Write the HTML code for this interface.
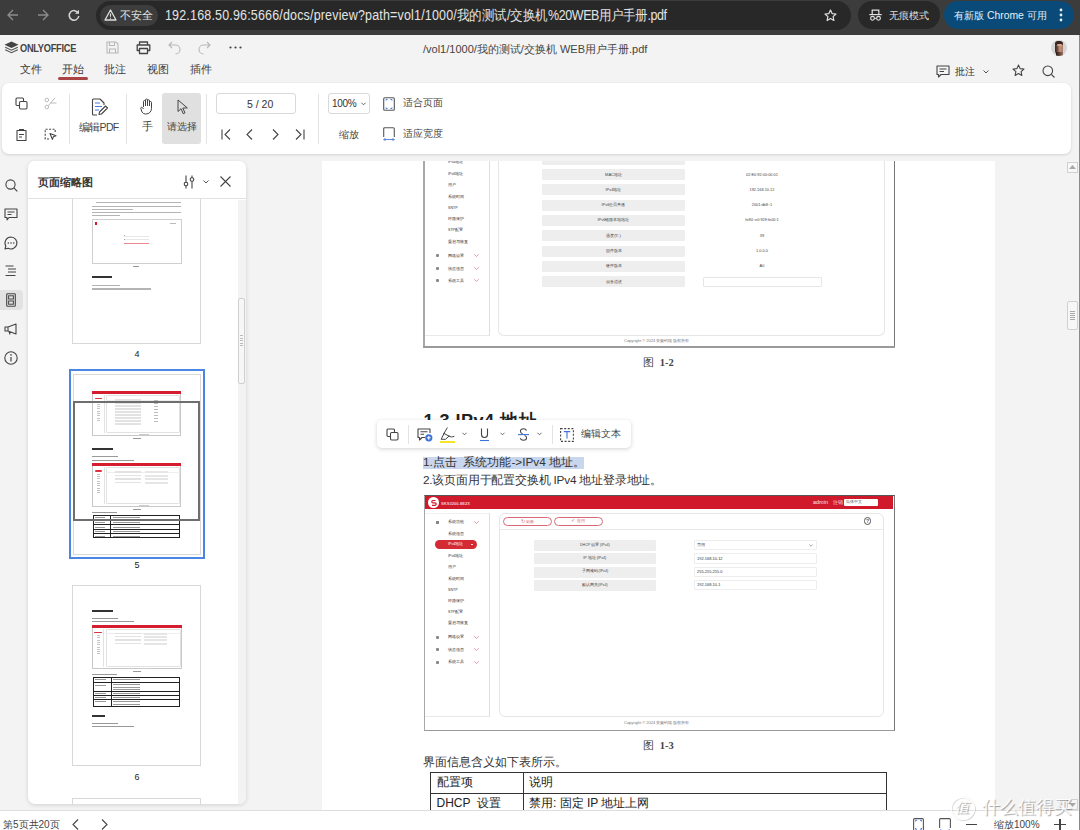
<!DOCTYPE html>
<html><head><meta charset="utf-8">
<style>
*{box-sizing:border-box;margin:0;padding:0}
html,body{width:1080px;height:830px;overflow:hidden}
body{position:relative;background:#f3f3f3;font-family:"Liberation Sans",sans-serif;color:#333}
.a{position:absolute}
svg{position:absolute;overflow:visible}
.t{position:absolute;white-space:nowrap;line-height:1}
</style></head><body>

<!-- ============ CHROME TOP BAR ============ -->
<div class="a" id="chrome" style="left:0;top:0;width:1080px;height:35px;background:#3c3c3c">
  <svg style="left:7px;top:9px" width="12" height="12" viewBox="0 0 12 12"><path d="M11 6H1.5M6 1L1 6l5 5" fill="none" stroke="#8c8c8c" stroke-width="1.4"/></svg>
  <svg style="left:37px;top:9px" width="12" height="12" viewBox="0 0 12 12"><path d="M1 6h9.5M6 1l5 5-5 5" fill="none" stroke="#8c8c8c" stroke-width="1.4"/></svg>
  <svg style="left:68px;top:9px" width="12" height="12" viewBox="0 0 12 12"><path d="M10.3 4.2A4.8 4.8 0 1 0 10.8 7" fill="none" stroke="#d6d6d6" stroke-width="1.5"/><path d="M11 0.8v4h-4z" fill="#d6d6d6"/></svg>
  <div class="a" style="left:96px;top:1px;width:755px;height:29px;border-radius:15px;background:#282828"></div>
  <div class="a" style="left:100px;top:5px;width:58px;height:21px;border-radius:11px;background:#3d3d3d"></div>
  <svg style="left:104px;top:9px" width="13" height="12" viewBox="0 0 13 12"><path d="M6.5 1L12 11H1z" fill="none" stroke="#e0e0e0" stroke-width="1.3" stroke-linejoin="round"/><path d="M6.5 4.5v3.3M6.5 8.8v1" stroke="#e0e0e0" stroke-width="1.1"/></svg>
  <div class="t" style="left:120px;top:10px;font-size:10.5px;color:#e3e3e3">不安全</div>
  <div class="t" style="left:165px;top:7.5px;font-size:14px;color:#e3e3e3;transform:scaleX(0.893);transform-origin:0 0"><span style="letter-spacing:0.19px">192.168.50.96:5666/docs/preview?path=vol1/1000/</span>我的测试/交换机<span style="letter-spacing:-0.45px">%20WEB用户手册.pdf</span></div>
  <svg style="left:824px;top:9px" width="13" height="13" viewBox="0 0 13 13"><path d="M6.5 1l1.6 3.6 3.9.4-2.9 2.6.8 3.9-3.4-2-3.4 2 .8-3.9L1 5l3.9-.4z" fill="none" stroke="#e0e0e0" stroke-width="1.2" stroke-linejoin="round"/></svg>
  <div class="a" style="left:858px;top:1px;width:82px;height:28px;border-radius:14px;background:#282828"></div>
  <svg style="left:869px;top:9px" width="13" height="12" viewBox="0 0 13 12"><path d="M3.2 5V1.2h6.6V5" fill="none" stroke="#e0e0e0" stroke-width="1.2"/><path d="M0.3 5.6h12.4" stroke="#e0e0e0" stroke-width="1.2"/><circle cx="3.5" cy="9.3" r="1.9" fill="none" stroke="#e0e0e0" stroke-width="1.1"/><circle cx="9.5" cy="9.3" r="1.9" fill="none" stroke="#e0e0e0" stroke-width="1.1"/><path d="M5.4 9.3h2.2" stroke="#e0e0e0" stroke-width="1"/></svg>
  <div class="t" style="left:889px;top:10.5px;font-size:10.3px;color:#e3e3e3">无痕模式</div>
  <div class="a" style="left:944px;top:1px;width:130px;height:28px;border-radius:14px;background:#0a4a78"></div>
  <div class="t" style="left:954px;top:10.5px;font-size:10.4px;color:#e6eef5">有新版 Chrome 可用</div>
  <svg style="left:1059px;top:8px" width="4" height="14" viewBox="0 0 4 14"><circle cx="2" cy="2" r="1.4" fill="#e6eef5"/><circle cx="2" cy="7" r="1.4" fill="#e6eef5"/><circle cx="2" cy="12" r="1.4" fill="#e6eef5"/></svg>
</div>

<!-- ============ ONLYOFFICE HEADER ============ -->
<div class="a" id="hdr" style="left:0;top:35px;width:1080px;height:125px;background:#f3f3f3">
  <!-- logo -->
  <svg style="left:4px;top:6px" width="15" height="13" viewBox="0 0 15 13"><path d="M7.5 0.5L14.5 3.8 7.5 7.1 0.5 3.8z" fill="#444"/><path d="M1.2 6.2l6.3 3 6.3-3M1.2 8.7l6.3 3 6.3-3" fill="none" stroke="#555" stroke-width="1.2"/></svg>
  <div class="t" id="logo" style="left:20px;top:8px;font-size:10.5px;letter-spacing:-0.3px;transform:scaleX(0.88);transform-origin:0 0;font-weight:bold;color:#444">ONLYOFFICE</div>
  <!-- quick icons -->
  <svg style="left:106px;top:6px" width="13" height="13" viewBox="0 0 13 13"><path d="M1 1h9l2 2v9H1z M3.5 1v3.5h5V1 M3.5 12V8h6v4" fill="none" stroke="#b8b8b8" stroke-width="1.1"/></svg>
  <svg style="left:136px;top:6px" width="15" height="13" viewBox="0 0 15 13"><path d="M3.5 4V1h8v3 M3.5 9.5H1.2V4h12.6v5.5h-2.3 M3.5 7.5h8v5h-8z" fill="none" stroke="#444" stroke-width="1.3" stroke-linejoin="round"/></svg>
  <svg style="left:168px;top:6px" width="13" height="13" viewBox="0 0 13 13"><path d="M4 1L1 4l3 3M1 4h6.5a4.5 4.5 0 0 1 0 9" fill="none" stroke="#b8b8b8" stroke-width="1.1"/></svg>
  <svg style="left:198px;top:6px" width="13" height="13" viewBox="0 0 13 13"><path d="M9 1l3 3-3 3M12 4H5.5a4.5 4.5 0 0 0 0 9" fill="none" stroke="#b8b8b8" stroke-width="1.1"/></svg>
  <svg style="left:229px;top:11px" width="13" height="3" viewBox="0 0 13 3"><circle cx="1.5" cy="1.5" r="1.1" fill="#444"/><circle cx="6.5" cy="1.5" r="1.1" fill="#444"/><circle cx="11.5" cy="1.5" r="1.1" fill="#444"/></svg>
  <div class="t" id="title" style="left:423px;top:9px;font-size:11px;color:#444">/vol1/1000/我的测试/交换机 WEB用户手册.pdf</div>
  <!-- avatar -->
  <div class="a" style="left:1050.5px;top:4.5px;width:16.5px;height:16px;border-radius:50%;background:#d6d6d6;overflow:hidden">
    <div class="a" style="left:4.5px;top:1.8px;width:8px;height:13px;border-radius:4px 4px 3px 3px;background:linear-gradient(90deg,#3a2620 0,#6a4a3c 30%,#c49480 60%,#a87a66 100%)"></div>
    <div class="a" style="left:4.5px;top:1.5px;width:8px;height:3.5px;border-radius:4px 4px 1px 1px;background:#3a2620"></div>
    <div class="a" style="left:6.5px;top:4px;width:4.5px;height:2.5px;border-radius:2px;background:#d9a890"></div>
    <div class="a" style="left:5px;top:12.5px;width:7px;height:5px;background:linear-gradient(90deg,#2a1a14,#9a7060)"></div>
  </div>
  <!-- tabs -->
  <div class="t" id="tab1" style="left:20px;top:29px;font-size:11px;color:#3a3a3a">文件</div>
  <div class="t" id="tab2" style="left:62px;top:29px;font-size:11px;color:#3a3a3a">开始</div>
  <div class="a" style="left:58px;top:42px;width:30px;height:3px;border-radius:2px;background:#aa4444"></div>
  <div class="t" id="tab3" style="left:104px;top:29px;font-size:11px;color:#3a3a3a">批注</div>
  <div class="t" id="tab4" style="left:147px;top:29px;font-size:11px;color:#3a3a3a">视图</div>
  <div class="t" id="tab5" style="left:190px;top:29px;font-size:11px;color:#3a3a3a">插件</div>
  <!-- right header -->
  <svg style="left:936px;top:30px" width="14" height="13" viewBox="0 0 14 13"><path d="M1 1h12v8.5H5L2.5 12V9.5H1z M3.5 4h7 M3.5 6.5h4.5" fill="none" stroke="#444" stroke-width="1.1" stroke-linejoin="round"/></svg>
  <div class="t" id="pz" style="left:955px;top:31.5px;font-size:10px;color:#333">批注</div>
  <svg style="left:983px;top:35px" width="6" height="4" viewBox="0 0 6 4"><path d="M0.5 0.5l2.5 2.5 2.5-2.5" fill="none" stroke="#555" stroke-width="1"/></svg>
  <svg style="left:1012px;top:29px" width="13" height="13" viewBox="0 0 13 13"><path d="M6.5 1l1.6 3.6 3.9.4-2.9 2.6.8 3.9-3.4-2-3.4 2 .8-3.9L1 5l3.9-.4z" fill="none" stroke="#444" stroke-width="1.1" stroke-linejoin="round"/></svg>
  <svg style="left:1042px;top:30px" width="13" height="13" viewBox="0 0 13 13"><circle cx="5.8" cy="5.8" r="4.8" fill="none" stroke="#444" stroke-width="1.1"/><path d="M9.3 9.3L12.5 12.5" stroke="#444" stroke-width="1.1"/></svg>
</div>

<!-- ============ TOOLBAR PANEL ============ -->
<div class="a" id="tb" style="left:2px;top:83px;width:1069px;height:71.3px;background:#fff;border-radius:7px;box-shadow:0 1px 3px rgba(0,0,0,0.14)">
</div>
<div class="a" id="tbi" style="left:0;top:0;width:1080px;height:160px">
  <!-- copy -->
  <svg style="left:15px;top:97px" width="13" height="13" viewBox="0 0 13 13"><path d="M4.5 8.5H2A1 1 0 0 1 1 7.5V2a1 1 0 0 1 1-1h5.5a1 1 0 0 1 1 1v2.5" fill="none" stroke="#444" stroke-width="1.1"/><rect x="4.5" y="4.5" width="7.5" height="7.5" rx="1.2" fill="none" stroke="#444" stroke-width="1.1"/></svg>
  <!-- cut -->
  <svg style="left:44px;top:97px" width="13" height="13" viewBox="0 0 13 13"><circle cx="2.8" cy="3" r="1.8" fill="none" stroke="#bbb" stroke-width="1"/><circle cx="2.8" cy="10" r="1.8" fill="none" stroke="#bbb" stroke-width="1"/><path d="M4.3 8.8L11 0.8 M6.5 6h6" fill="none" stroke="#bbb" stroke-width="1"/></svg>
  <!-- paste -->
  <svg style="left:16px;top:128px" width="11" height="13" viewBox="0 0 11 13"><path d="M3 1.5h5M1 2.5h9v10H1z M3 6.5h5 M3 9h3" fill="none" stroke="#444" stroke-width="1.1" stroke-linejoin="round"/></svg>
  <!-- select all -->
  <svg style="left:44px;top:128px" width="13" height="13" viewBox="0 0 13 13"><path d="M5 11H1.2V1.2h10v3.5" fill="none" stroke="#444" stroke-width="1.1" stroke-dasharray="2 1.5"/><path d="M6 5.5l6 2.3-2.6 1-1 2.6z" fill="none" stroke="#444" stroke-width="1.1" stroke-linejoin="round"/></svg>
  <div class="a" style="left:69px;top:94px;width:1px;height:50px;background:#e3e3e3"></div>
  <!-- edit pdf -->
  <svg style="left:91px;top:98px" width="17" height="18" viewBox="0 0 17 18"><path d="M9 1H2.5A1 1 0 0 0 1.5 2v14a1 1 0 0 0 1 1H6 M9 1l4 4v2" fill="none" stroke="#444" stroke-width="1.1" stroke-linejoin="round"/><path d="M4 5h5M4 8.5h7M4 12h4" stroke="#4a7be0" stroke-width="1.1"/><path d="M8 16.5l0.5-2.5 6-6 2 2-6 6z" fill="none" stroke="#444" stroke-width="1.1" stroke-linejoin="round"/></svg>
  <div class="t" id="editpdf" style="left:79px;top:121.5px;font-size:10.5px;letter-spacing:-0.7px;color:#444">编辑PDF</div>
  <div class="a" style="left:126px;top:94px;width:1px;height:50px;background:#e3e3e3"></div>
  <!-- hand -->
  <svg style="left:140px;top:98px" width="13" height="17" viewBox="0 0 13 17"><path d="M3.5 9V3.5a1 1 0 0 1 2 0V8 M5.5 8V2a1 1 0 0 1 2 0v6 M7.5 8V2.8a1 1 0 0 1 2 0V8 M9.5 8V4.5a1 1 0 0 1 2 0v6a5.5 5.5 0 0 1-5.5 5.5h-.5A4 4 0 0 1 2 14L0.8 10.5a1 1 0 0 1 1.8-0.8L3.5 11" fill="none" stroke="#444" stroke-width="1" stroke-linejoin="round"/></svg>
  <div class="t" id="hand" style="left:142px;top:121px;font-size:11px;color:#444">手</div>
  <div class="a" style="left:162px;top:93px;width:39px;height:51px;border-radius:3px;background:#e0e0e0"></div>
  <svg style="left:177px;top:99px" width="12" height="16" viewBox="0 0 12 16"><path d="M1 1v11.5l3-2.8 2.2 5 1.8-0.8-2.2-4.8 4.5-0.2z" fill="none" stroke="#444" stroke-width="1" stroke-linejoin="round"/></svg>
  <div class="t" id="sel" style="left:167px;top:122px;font-size:10px;color:#444">请选择</div>
  <div class="a" style="left:206px;top:94px;width:1px;height:50px;background:#e3e3e3"></div>
  <!-- page input -->
  <div class="a" style="left:216px;top:93px;width:80px;height:21px;border:1px solid #d9d9d9;border-radius:3px;background:#fff"></div>
  <div class="t" id="pgnum" style="left:247px;top:98.5px;font-size:10.5px;color:#333">5 / 20</div>
  <svg style="left:221px;top:129px" width="10" height="11" viewBox="0 0 10 11"><path d="M1 0.5v10M9 0.5L4 5.5l5 5" fill="none" stroke="#444" stroke-width="1.1"/></svg>
  <svg style="left:246px;top:129px" width="7" height="11" viewBox="0 0 7 11"><path d="M6 0.5L1 5.5l5 5" fill="none" stroke="#444" stroke-width="1.1"/></svg>
  <svg style="left:272px;top:129px" width="7" height="11" viewBox="0 0 7 11"><path d="M1 0.5l5 5-5 5" fill="none" stroke="#444" stroke-width="1.1"/></svg>
  <svg style="left:295px;top:129px" width="10" height="11" viewBox="0 0 10 11"><path d="M9 0.5v10M1 0.5l5 5-5 5" fill="none" stroke="#444" stroke-width="1.1"/></svg>
  <div class="a" style="left:318px;top:94px;width:1px;height:50px;background:#e3e3e3"></div>
  <!-- zoom -->
  <div class="a" style="left:328px;top:93px;width:42px;height:21px;border:1px solid #d9d9d9;border-radius:3px;background:#fff"></div>
  <div class="t" id="zm" style="left:332px;top:98.5px;font-size:10px;letter-spacing:-0.3px;color:#333">100%</div>
  <svg style="left:361px;top:102px" width="5" height="4" viewBox="0 0 5 4"><path d="M0.5 0.8l2 2 2-2" fill="none" stroke="#555" stroke-width="0.9"/></svg>
  <div class="t" id="sf" style="left:339px;top:130px;font-size:10px;color:#444">缩放</div>
  <svg style="left:383px;top:97px" width="12" height="14" viewBox="0 0 12 14"><rect x="0.7" y="0.7" width="10.6" height="12.6" rx="1" fill="none" stroke="#555" stroke-width="1.1"/><path d="M3 3.5V2.5h1.5M7.5 2.5H9v1M9 10.5v1H7.5M4.5 11.5H3v-1" fill="none" stroke="#4a7be0" stroke-width="1"/></svg>
  <div class="t" id="fitp" style="left:402.5px;top:98px;font-size:10px;color:#444">适合页面</div>
  <svg style="left:383px;top:127px" width="12" height="14" viewBox="0 0 12 14"><path d="M0.7 10V1.7a1 1 0 0 1 1-1h8.6a1 1 0 0 1 1 1V10" fill="none" stroke="#555" stroke-width="1.1"/><path d="M0.5 12.5h11M2.5 11l-1.5 1.5 1.5 1.5M9.5 11l1.5 1.5-1.5 1.5" fill="none" stroke="#4a7be0" stroke-width="0.9"/></svg>
  <div class="t" id="fitw" style="left:402.5px;top:129px;font-size:10px;color:#444">适应宽度</div>
</div>

<!-- ============ LEFT ICON BAR ============ -->
<div class="a" id="lbar" style="left:0;top:160px;width:26px;height:650px">
  <svg style="left:5px;top:19px" width="13" height="13" viewBox="0 0 13 13"><circle cx="5.5" cy="5.5" r="4.6" fill="none" stroke="#444" stroke-width="1.1"/><path d="M8.8 8.8L12.3 12.3" stroke="#444" stroke-width="1.2"/></svg>
  <svg style="left:4px;top:48px" width="14" height="13" viewBox="0 0 14 13"><path d="M1 1h12v8.5H5L3 11.8V9.5H1z" fill="none" stroke="#444" stroke-width="1.1" stroke-linejoin="round"/><path d="M3.5 4h7M3.5 6.5h4" stroke="#444" stroke-width="1.1"/></svg>
  <svg style="left:4px;top:76px" width="14" height="14" viewBox="0 0 14 14"><path d="M7 1a6 6 0 1 1-2.9 11.3L1 13l0.8-3A6 6 0 0 1 7 1z" fill="none" stroke="#444" stroke-width="1.1" stroke-linejoin="round"/><circle cx="4.3" cy="7" r="0.8" fill="#444"/><circle cx="7" cy="7" r="0.8" fill="#444"/><circle cx="9.7" cy="7" r="0.8" fill="#444"/></svg>
  <svg style="left:5px;top:105px" width="12" height="12" viewBox="0 0 12 12"><path d="M0.5 1h8M3 4h8M3 7h8M0.5 10.5h10" stroke="#444" stroke-width="1.1"/></svg>
  <div class="a" style="left:0;top:130px;width:23px;height:20px;border-radius:0 4px 4px 0;background:#e2e2e2"></div>
  <svg style="left:6px;top:133px" width="10" height="14" viewBox="0 0 10 14"><rect x="0.7" y="0.7" width="8.6" height="12.6" rx="0.8" fill="none" stroke="#444" stroke-width="1.1"/><rect x="2.6" y="2.8" width="4.8" height="3.2" fill="none" stroke="#444" stroke-width="1"/><rect x="2.6" y="8" width="4.8" height="3.2" fill="none" stroke="#444" stroke-width="1"/></svg>
  <svg style="left:4px;top:163px" width="14" height="12" viewBox="0 0 14 12"><path d="M1 4h3l8-3v10L4 8H1z M4 4v4 M5 8.3l1 3.2" fill="none" stroke="#444" stroke-width="1.1" stroke-linejoin="round"/></svg>
  <svg style="left:4px;top:191px" width="14" height="14" viewBox="0 0 14 14"><circle cx="7" cy="7" r="6.2" fill="none" stroke="#444" stroke-width="1.1"/><path d="M7 6v4.5" stroke="#444" stroke-width="1.2"/><circle cx="7" cy="3.9" r="0.8" fill="#444"/></svg>
</div>

<!-- ============ THUMBNAILS PANEL ============ -->
<div class="a" id="thp" style="left:28px;top:161px;width:218px;height:643px;background:#fff;border-radius:7px;box-shadow:0 1px 4px rgba(0,0,0,0.14);overflow:hidden">
  <div class="a" style="left:-28px;top:-161px;width:1080px;height:830px"><div class="a" style="left:72.4px;top:150px;width:128.6px;height:193.6px;border:1px solid #d8d8d8;background:#fff"></div>
<div class="a" style="left:96px;top:202.3px;width:85px;height:1.2px;background:#b4b4b4"></div>
<div class="a" style="left:92px;top:205.9px;width:89px;height:1.2px;background:#b4b4b4"></div>
<div class="a" style="left:92px;top:209.1px;width:41px;height:1.2px;background:#b4b4b4"></div>
<div class="a" style="left:92px;top:212px;width:89px;height:1.2px;background:#b4b4b4"></div>
<div class="a" style="left:92px;top:215px;width:28px;height:1.2px;background:#b4b4b4"></div>
<div class="a" style="left:92.2px;top:219.3px;width:89.4px;height:44.7px;border:0.8px solid #cfcfcf"></div>
<div class="a" style="left:95.3px;top:221.6px;width:1.7px;height:3.1px;background:#d0192b"></div>
<div class="a" style="left:124.2px;top:243.2px;width:25.3px;height:1.1px;background:#e88a94"></div>
<div class="a" style="left:124.2px;top:235.5px;width:25.3px;height:0.7px;background:#e8e8e8"></div>
<div class="a" style="left:124.2px;top:239.3px;width:25.3px;height:0.7px;background:#e8e8e8"></div>
<div class="a" style="left:124.2px;top:235px;width:1.3px;height:1px;background:#aaa"></div>
<div class="a" style="left:124.2px;top:238.8px;width:1.3px;height:1.0px;background:#aaa"></div>
<div class="a" style="left:170px;top:222.8px;width:6px;height:0.8px;background:#bbb"></div>
<div class="a" style="left:133px;top:265.6px;width:6px;height:0.9px;background:#999"></div>
<div class="a" style="left:92px;top:276.3px;width:20px;height:1.8px;background:#333"></div>
<div class="a" style="left:92px;top:285px;width:28px;height:1.2px;background:#b4b4b4"></div>
<div class="a" style="left:92px;top:288.4px;width:59px;height:1.2px;background:#b4b4b4"></div>
<div class="t" style="left:-13px;top:350.3px;width:300px;text-align:center;font-size:9px;color:#222">4</div>
<div class="a" style="left:68.5px;top:369.2px;width:136.8px;height:189.5px;border:2.6px solid #4a86e4"></div>
<div class="a" style="left:72.5px;top:373.8px;width:128.5px;height:181.7px;border:1px solid #d8d8d8"></div>
<div class="a" style="left:91.9px;top:391px;width:89.4px;height:44.7px;border:0.7px solid #c8c8c8;background:#fff"></div>
<div class="a" style="left:91.9px;top:391px;width:89.4px;height:3px;background:#d41e30"></div>
<div class="a" style="left:92.60000000000001px;top:395px;width:12.1px;height:38.2px;border-right:0.5px solid #e2e2e2"></div>
<div class="a" style="left:105.9px;top:395px;width:74.6px;height:38.0px;border:0.5px solid #e2e2e2;border-radius:1px"></div>
<div class="a" style="left:105.9px;top:399.5px;width:74.6px;height:0.4px;background:#eee"></div>
<div class="a" style="left:94.5px;top:398px;width:7.9px;height:1.4px;background:#e0303f;border-radius:1px"></div>
<div class="a" style="left:114.9px;top:399.0px;width:26.6px;height:1.6px;background:#e2e2e2"></div>
<div class="a" style="left:153.9px;top:399.6px;width:4.0px;height:0.6px;background:#bbb"></div>
<div class="a" style="left:114.9px;top:402.0px;width:26.6px;height:1.6px;background:#e2e2e2"></div>
<div class="a" style="left:153.9px;top:402.6px;width:4.0px;height:0.6px;background:#bbb"></div>
<div class="a" style="left:114.9px;top:405.0px;width:26.6px;height:1.6px;background:#e2e2e2"></div>
<div class="a" style="left:153.9px;top:405.6px;width:4.0px;height:0.6px;background:#bbb"></div>
<div class="a" style="left:114.9px;top:408.0px;width:26.6px;height:1.6px;background:#e2e2e2"></div>
<div class="a" style="left:153.9px;top:408.6px;width:4.0px;height:0.6px;background:#bbb"></div>
<div class="a" style="left:114.9px;top:411.0px;width:26.6px;height:1.6px;background:#e2e2e2"></div>
<div class="a" style="left:153.9px;top:411.6px;width:4.0px;height:0.6px;background:#bbb"></div>
<div class="a" style="left:114.9px;top:414.0px;width:26.6px;height:1.6px;background:#e2e2e2"></div>
<div class="a" style="left:153.9px;top:414.6px;width:4.0px;height:0.6px;background:#bbb"></div>
<div class="a" style="left:114.9px;top:417.0px;width:26.6px;height:1.6px;background:#e2e2e2"></div>
<div class="a" style="left:153.9px;top:417.6px;width:4.0px;height:0.6px;background:#bbb"></div>
<div class="a" style="left:114.9px;top:420.0px;width:26.6px;height:1.6px;background:#e2e2e2"></div>
<div class="a" style="left:153.9px;top:420.6px;width:4.0px;height:0.6px;background:#bbb"></div>
<div class="a" style="left:114.9px;top:423.0px;width:26.6px;height:1.6px;background:#e2e2e2"></div>
<div class="a" style="left:96.9px;top:401.5px;width:3.5px;height:0.6px;background:#c4c4c4"></div>
<div class="a" style="left:96.9px;top:403.8px;width:3.5px;height:0.6px;background:#c4c4c4"></div>
<div class="a" style="left:96.9px;top:406.1px;width:3.5px;height:0.6px;background:#c4c4c4"></div>
<div class="a" style="left:96.9px;top:408.4px;width:3.5px;height:0.6px;background:#c4c4c4"></div>
<div class="a" style="left:96.9px;top:410.7px;width:3.5px;height:0.6px;background:#c4c4c4"></div>
<div class="a" style="left:96.9px;top:413.0px;width:3.5px;height:0.6px;background:#c4c4c4"></div>
<div class="a" style="left:96.9px;top:415.3px;width:3.5px;height:0.6px;background:#c4c4c4"></div>
<div class="a" style="left:96.9px;top:417.6px;width:3.5px;height:0.6px;background:#c4c4c4"></div>
<div class="a" style="left:96.9px;top:419.9px;width:3.5px;height:0.6px;background:#c4c4c4"></div>
<div class="a" style="left:138.9px;top:433.9px;width:10.0px;height:0.6px;background:#ccc"></div>
<div class="a" style="left:133px;top:437.5px;width:8px;height:0.8px;background:#999"></div>
<div class="a" style="left:92px;top:448px;width:21px;height:1.6px;background:#333"></div>
<div class="a" style="left:92px;top:456.2px;width:26px;height:0.8px;background:#999"></div>
<div class="a" style="left:92px;top:460.2px;width:42px;height:0.8px;background:#999"></div>
<div class="a" style="left:91.9px;top:463.3px;width:89.4px;height:43.7px;border:0.7px solid #c8c8c8;background:#fff"></div>
<div class="a" style="left:91.9px;top:463.3px;width:89.4px;height:3.0px;background:#d41e30"></div>
<div class="a" style="left:92.60000000000001px;top:467.3px;width:12.1px;height:37.2px;border-right:0.5px solid #e2e2e2"></div>
<div class="a" style="left:105.9px;top:467.3px;width:74.6px;height:37.0px;border:0.5px solid #e2e2e2;border-radius:1px"></div>
<div class="a" style="left:105.9px;top:471.8px;width:74.6px;height:0.4px;background:#eee"></div>
<div class="a" style="left:94.5px;top:470.3px;width:7.9px;height:1.4px;background:#e0303f;border-radius:1px"></div>
<div class="a" style="left:114.9px;top:471.3px;width:26.6px;height:1.6px;background:#e2e2e2"></div>
<div class="a" style="left:144.5px;top:471.3px;width:23.1px;height:1.6px;border:0.4px solid #e6e6e6"></div>
<div class="a" style="left:114.9px;top:474.7px;width:26.6px;height:1.6px;background:#e2e2e2"></div>
<div class="a" style="left:144.5px;top:474.7px;width:23.1px;height:1.6px;border:0.4px solid #e6e6e6"></div>
<div class="a" style="left:114.9px;top:478.1px;width:26.6px;height:1.6px;background:#e2e2e2"></div>
<div class="a" style="left:144.5px;top:478.1px;width:23.1px;height:1.6px;border:0.4px solid #e6e6e6"></div>
<div class="a" style="left:114.9px;top:481.5px;width:26.6px;height:1.6px;background:#e2e2e2"></div>
<div class="a" style="left:144.5px;top:481.5px;width:23.1px;height:1.6px;border:0.4px solid #e6e6e6"></div>
<div class="a" style="left:96.9px;top:473.8px;width:3.5px;height:0.6px;background:#c4c4c4"></div>
<div class="a" style="left:96.9px;top:476.1px;width:3.5px;height:0.6px;background:#c4c4c4"></div>
<div class="a" style="left:96.9px;top:478.40000000000003px;width:3.5px;height:0.6px;background:#c4c4c4"></div>
<div class="a" style="left:96.9px;top:480.7px;width:3.5px;height:0.6px;background:#c4c4c4"></div>
<div class="a" style="left:96.9px;top:483.0px;width:3.5px;height:0.6px;background:#c4c4c4"></div>
<div class="a" style="left:96.9px;top:485.3px;width:3.5px;height:0.6px;background:#c4c4c4"></div>
<div class="a" style="left:96.9px;top:487.6px;width:3.5px;height:0.6px;background:#c4c4c4"></div>
<div class="a" style="left:96.9px;top:489.90000000000003px;width:3.5px;height:0.6px;background:#c4c4c4"></div>
<div class="a" style="left:96.9px;top:492.2px;width:3.5px;height:0.6px;background:#c4c4c4"></div>
<div class="a" style="left:138.9px;top:505.2px;width:10.0px;height:0.6px;background:#ccc"></div>
<div class="a" style="left:133px;top:509.2px;width:8px;height:0.8px;background:#999"></div>
<div class="a" style="left:92px;top:512.3px;width:25px;height:0.8px;background:#999"></div>
<div class="a" style="left:93px;top:515px;width:86.7px;height:23px;border:1px solid #222"></div>
<div class="a" style="left:93px;top:519.5px;width:86.7px;height:0.9px;background:#222"></div>
<div class="a" style="left:93px;top:524.2px;width:86.7px;height:0.9px;background:#222"></div>
<div class="a" style="left:93px;top:528.8px;width:86.7px;height:0.9px;background:#222"></div>
<div class="a" style="left:93px;top:533.4px;width:86.7px;height:0.9px;background:#222"></div>
<div class="a" style="left:110px;top:515px;width:0.9px;height:23px;background:#222"></div>
<div class="a" style="left:110px;top:515px;width:0.9px;height:23px;background:#222"></div>
<div class="a" style="left:95px;top:517.3px;width:10px;height:0.8px;background:#999"></div>
<div class="a" style="left:113px;top:517.3px;width:27px;height:0.8px;background:#999"></div>
<div class="a" style="left:95px;top:521.8px;width:10px;height:0.8px;background:#999"></div>
<div class="a" style="left:113px;top:521.8px;width:27px;height:0.8px;background:#999"></div>
<div class="a" style="left:95px;top:526.5px;width:10px;height:0.8px;background:#999"></div>
<div class="a" style="left:113px;top:526.5px;width:27px;height:0.8px;background:#999"></div>
<div class="a" style="left:95px;top:531.0999999999999px;width:10px;height:0.8px;background:#999"></div>
<div class="a" style="left:113px;top:531.0999999999999px;width:27px;height:0.8px;background:#999"></div>
<div class="a" style="left:95px;top:535.8px;width:10px;height:0.8px;background:#999"></div>
<div class="a" style="left:113px;top:535.8px;width:27px;height:0.8px;background:#999"></div>
<div class="a" style="left:73.2px;top:400.5px;width:126.8px;height:120.5px;border:2px solid #6e6e6e"></div>
<div class="t" style="left:-13px;top:560.8px;width:300px;text-align:center;font-size:9px;color:#222">5</div>
<div class="a" style="left:72.4px;top:585.3px;width:128.4px;height:181.1px;border:1px solid #d8d8d8"></div>
<div class="a" style="left:91.5px;top:610px;width:21.2px;height:1.6px;background:#333"></div>
<div class="a" style="left:91.5px;top:618px;width:26.5px;height:0.8px;background:#999"></div>
<div class="a" style="left:91.5px;top:621.2px;width:42.5px;height:0.8px;background:#999"></div>
<div class="a" style="left:91.5px;top:624.5px;width:90.1px;height:44.8px;border:0.7px solid #c8c8c8;background:#fff"></div>
<div class="a" style="left:91.5px;top:624.5px;width:90.1px;height:3.0px;background:#d41e30"></div>
<div class="a" style="left:92.2px;top:628.5px;width:12.1px;height:38.3px;border-right:0.5px solid #e2e2e2"></div>
<div class="a" style="left:105.5px;top:628.5px;width:75.3px;height:38.1px;border:0.5px solid #e2e2e2;border-radius:1px"></div>
<div class="a" style="left:105.5px;top:633.0px;width:75.3px;height:0.4px;background:#eee"></div>
<div class="a" style="left:94.1px;top:631.5px;width:7.9px;height:1.4px;background:#e0303f;border-radius:1px"></div>
<div class="a" style="left:114.5px;top:632.5px;width:26.6px;height:1.6px;background:#e2e2e2"></div>
<div class="a" style="left:144.1px;top:632.5px;width:23.1px;height:1.6px;border:0.4px solid #e6e6e6"></div>
<div class="a" style="left:114.5px;top:635.9px;width:26.6px;height:1.6px;background:#e2e2e2"></div>
<div class="a" style="left:144.1px;top:635.9px;width:23.1px;height:1.6px;border:0.4px solid #e6e6e6"></div>
<div class="a" style="left:114.5px;top:639.3px;width:26.6px;height:1.6px;background:#e2e2e2"></div>
<div class="a" style="left:144.1px;top:639.3px;width:23.1px;height:1.6px;border:0.4px solid #e6e6e6"></div>
<div class="a" style="left:114.5px;top:642.7px;width:26.6px;height:1.6px;background:#e2e2e2"></div>
<div class="a" style="left:144.1px;top:642.7px;width:23.1px;height:1.6px;border:0.4px solid #e6e6e6"></div>
<div class="a" style="left:96.5px;top:635.0px;width:3.5px;height:0.6px;background:#c4c4c4"></div>
<div class="a" style="left:96.5px;top:637.3px;width:3.5px;height:0.6px;background:#c4c4c4"></div>
<div class="a" style="left:96.5px;top:639.6px;width:3.5px;height:0.6px;background:#c4c4c4"></div>
<div class="a" style="left:96.5px;top:641.9px;width:3.5px;height:0.6px;background:#c4c4c4"></div>
<div class="a" style="left:96.5px;top:644.2px;width:3.5px;height:0.6px;background:#c4c4c4"></div>
<div class="a" style="left:96.5px;top:646.5px;width:3.5px;height:0.6px;background:#c4c4c4"></div>
<div class="a" style="left:96.5px;top:648.8px;width:3.5px;height:0.6px;background:#c4c4c4"></div>
<div class="a" style="left:96.5px;top:651.1px;width:3.5px;height:0.6px;background:#c4c4c4"></div>
<div class="a" style="left:96.5px;top:653.4px;width:3.5px;height:0.6px;background:#c4c4c4"></div>
<div class="a" style="left:138.5px;top:667.5px;width:10.0px;height:0.6px;background:#ccc"></div>
<div class="a" style="left:133px;top:671px;width:8px;height:0.8px;background:#999"></div>
<div class="a" style="left:91.5px;top:673.7px;width:25.5px;height:0.8px;background:#999"></div>
<div class="a" style="left:92.8px;top:676.8px;width:87.0px;height:29.9px;border:1px solid #222"></div>
<div class="a" style="left:92.8px;top:681.5px;width:87.0px;height:0.9px;background:#222"></div>
<div class="a" style="left:92.8px;top:691.3px;width:87.0px;height:0.9px;background:#222"></div>
<div class="a" style="left:92.8px;top:695.3px;width:87.0px;height:0.9px;background:#222"></div>
<div class="a" style="left:92.8px;top:699.3px;width:87.0px;height:0.9px;background:#222"></div>
<div class="a" style="left:110.5px;top:676.8px;width:0.9px;height:29.9px;background:#222"></div>
<div class="a" style="left:113px;top:678.5px;width:27px;height:0.8px;background:#999"></div>
<div class="a" style="left:113px;top:683.5px;width:27px;height:0.8px;background:#999"></div>
<div class="a" style="left:113px;top:686.5px;width:27px;height:0.8px;background:#999"></div>
<div class="a" style="left:113px;top:689px;width:27px;height:0.8px;background:#999"></div>
<div class="a" style="left:113px;top:692.8px;width:27px;height:0.8px;background:#999"></div>
<div class="a" style="left:113px;top:696.8px;width:27px;height:0.8px;background:#999"></div>
<div class="a" style="left:113px;top:701px;width:27px;height:0.8px;background:#999"></div>
<div class="a" style="left:113px;top:703.5px;width:27px;height:0.8px;background:#999"></div>
<div class="a" style="left:95px;top:678.5px;width:11px;height:0.8px;background:#999"></div>
<div class="a" style="left:95px;top:685px;width:11px;height:0.8px;background:#999"></div>
<div class="a" style="left:95px;top:693px;width:11px;height:0.8px;background:#999"></div>
<div class="a" style="left:95px;top:697px;width:11px;height:0.8px;background:#999"></div>
<div class="a" style="left:95px;top:701px;width:11px;height:0.8px;background:#999"></div>
<div class="a" style="left:91.5px;top:715px;width:13.5px;height:1.6px;background:#333"></div>
<div class="a" style="left:91.5px;top:722.8px;width:26.5px;height:0.8px;background:#999"></div>
<div class="a" style="left:91.5px;top:726px;width:42.5px;height:0.8px;background:#999"></div>
<div class="t" style="left:-13px;top:773.0px;width:300px;text-align:center;font-size:9px;color:#222">6</div>
<div class="a" style="left:72.4px;top:797.5px;width:128.4px;height:32.5px;border:1px solid #d8d8d8"></div>
</div>
  <div class="a" style="left:0;top:0;width:218px;height:38px;border-bottom:1px solid #e2e2e2;background:#fff"></div>
  <div class="t" id="thtitle" style="left:10px;top:15.5px;font-size:10.5px;font-weight:bold;color:#333">页面缩略图</div>
  <svg style="left:155px;top:14px" width="12" height="14" viewBox="0 0 12 14"><path d="M3 0.5v13M9 0.5v13" stroke="#444" stroke-width="1.1"/><circle cx="3" cy="9" r="1.8" fill="#fff" stroke="#444" stroke-width="1.1"/><circle cx="9" cy="4.5" r="1.8" fill="#fff" stroke="#444" stroke-width="1.1"/></svg>
  <svg style="left:175px;top:19px" width="6" height="4" viewBox="0 0 6 4"><path d="M0.5 0.5l2.5 2.5 2.5-2.5" fill="none" stroke="#555" stroke-width="1"/></svg>
  <svg style="left:192px;top:15px" width="11" height="11" viewBox="0 0 11 11"><path d="M0.5 0.5l10 10M10.5 0.5l-10 10" stroke="#444" stroke-width="1.1"/></svg>
  <!-- scrollbar -->
  <div class="a" style="left:210px;top:39px;width:8px;height:604px;background:#f3f3f3"></div>
  <div class="a" style="left:210px;top:137px;width:7px;height:86px;border:1px solid #cfcfcf;border-radius:2px;background:#f7f7f7"></div>
  <div class="a" style="left:212px;top:174px;width:3px;height:12px;background:repeating-linear-gradient(#bbb 0 1px,transparent 1px 2.5px)"></div>
</div>

<!-- ============ DOCUMENT AREA ============ -->
<div class="a" id="page" style="left:322px;top:161px;width:673px;height:649px;background:#fff;overflow:hidden">
<div class="a" style="left:-322px;top:-161px;width:1080px;height:830px">
<div class="a" style="left:423.3px;top:120px;width:1.7px;height:228px;background:#a8a8a8"></div>
<div class="a" style="left:893.8px;top:120px;width:1.3px;height:228px;background:#777"></div>
<div class="a" style="left:423.3px;top:346.4px;width:471.8px;height:1.6px;background:#9a9a9a"></div>
<div class="a" style="left:425px;top:120px;width:64.6px;height:215.6px;border-right:1px solid #dedede;border-bottom:1px solid #e8e8e8"></div>
<div class="a" style="left:498px;top:120px;width:386.6px;height:215.8px;border:1px solid #e6e6e6;border-top:none;border-radius:0 0 6px 6px"></div>
<div class="t" style="left:448px;top:161.4px;font-size:3.6px;color:#333">IPv4地址</div>
<div class="t" style="left:448px;top:173.0px;font-size:3.6px;color:#333">IPv6地址</div>
<div class="t" style="left:448px;top:184.2px;font-size:3.6px;color:#333">用户</div>
<div class="t" style="left:448px;top:195.6px;font-size:3.6px;color:#333">系统时间</div>
<div class="t" style="left:448px;top:206.7px;font-size:3.6px;color:#333">SNTP</div>
<div class="t" style="left:448px;top:218.1px;font-size:3.6px;color:#333">环路保护</div>
<div class="t" style="left:448px;top:229.4px;font-size:3.6px;color:#333">STP配置</div>
<div class="t" style="left:448px;top:240.5px;font-size:3.6px;color:#333">重启与恢复</div>
<div class="t" style="left:448px;top:254.9px;font-size:3.6px;color:#333">网络设置</div>
<div class="a" style="left:435.5px;top:254.2px;width:3.0px;height:3.0px;background:#888;border-radius:1px"></div>
<svg style="left:473.5px;top:254.2px" width="5" height="3" viewBox="0 0 5 3"><path d="M0.3 0.3l2.2 2.2 2.2-2.2" fill="none" stroke="#e07080" stroke-width="0.7"/></svg>
<div class="t" style="left:448px;top:267.5px;font-size:3.6px;color:#333">状态信息</div>
<div class="a" style="left:435.5px;top:266.8px;width:3.0px;height:3.0px;background:#888;border-radius:1px"></div>
<svg style="left:473.5px;top:266.8px" width="5" height="3" viewBox="0 0 5 3"><path d="M0.3 0.3l2.2 2.2 2.2-2.2" fill="none" stroke="#e07080" stroke-width="0.7"/></svg>
<div class="t" style="left:448px;top:280.0px;font-size:3.6px;color:#333">系统工具</div>
<div class="a" style="left:435.5px;top:279.3px;width:3.0px;height:3.0px;background:#888;border-radius:1px"></div>
<svg style="left:473.5px;top:279.3px" width="5" height="3" viewBox="0 0 5 3"><path d="M0.3 0.3l2.2 2.2 2.2-2.2" fill="none" stroke="#e07080" stroke-width="0.7"/></svg>
<div class="a" style="left:542px;top:153.7px;width:143px;height:11.0px;background:#eeeeee;border-radius:1px"></div>
<div class="a" style="left:542px;top:169.0px;width:143px;height:11.0px;background:#eeeeee;border-radius:1px"></div>
<div class="t" style="left:463.5px;top:172.5px;width:300px;text-align:center;font-size:4px;color:#444">MAC地址</div>
<div class="t" style="left:612px;top:172.55px;width:300px;text-align:center;font-size:3.9px;color:#444">02:E0:92:00:00:01</div>
<div class="a" style="left:542px;top:184.29999999999998px;width:143px;height:11.0px;background:#eeeeee;border-radius:1px"></div>
<div class="t" style="left:463.5px;top:187.79999999999998px;width:300px;text-align:center;font-size:4px;color:#444">IPv4地址</div>
<div class="t" style="left:612px;top:187.85px;width:300px;text-align:center;font-size:3.9px;color:#444">192.168.10.12</div>
<div class="a" style="left:542px;top:199.6px;width:143px;height:11.0px;background:#eeeeee;border-radius:1px"></div>
<div class="t" style="left:463.5px;top:203.1px;width:300px;text-align:center;font-size:4px;color:#444">IPv6全局单播</div>
<div class="t" style="left:612px;top:203.15px;width:300px;text-align:center;font-size:3.9px;color:#444">2001:db8::1</div>
<div class="a" style="left:542px;top:214.89999999999998px;width:143px;height:11.0px;background:#eeeeee;border-radius:1px"></div>
<div class="t" style="left:463.5px;top:218.39999999999998px;width:300px;text-align:center;font-size:4px;color:#444">IPv6链路本地地址</div>
<div class="t" style="left:612px;top:218.45px;width:300px;text-align:center;font-size:3.9px;color:#444">fe80::e0:92ff:fe00:1</div>
<div class="a" style="left:542px;top:230.2px;width:143px;height:11.0px;background:#eeeeee;border-radius:1px"></div>
<div class="t" style="left:463.5px;top:233.7px;width:300px;text-align:center;font-size:4px;color:#444">温度(℃)</div>
<div class="t" style="left:612px;top:233.75px;width:300px;text-align:center;font-size:3.9px;color:#444">39</div>
<div class="a" style="left:542px;top:245.5px;width:143px;height:11.0px;background:#eeeeee;border-radius:1px"></div>
<div class="t" style="left:463.5px;top:249.0px;width:300px;text-align:center;font-size:4px;color:#444">固件版本</div>
<div class="t" style="left:612px;top:249.05px;width:300px;text-align:center;font-size:3.9px;color:#444">1.0.0.0</div>
<div class="a" style="left:542px;top:260.8px;width:143px;height:11.0px;background:#eeeeee;border-radius:1px"></div>
<div class="t" style="left:463.5px;top:264.3px;width:300px;text-align:center;font-size:4px;color:#444">硬件版本</div>
<div class="t" style="left:612px;top:264.35px;width:300px;text-align:center;font-size:3.9px;color:#444">A0</div>
<div class="a" style="left:542px;top:276.1px;width:143px;height:11.0px;background:#eeeeee;border-radius:1px"></div>
<div class="t" style="left:463.5px;top:279.6px;width:300px;text-align:center;font-size:4px;color:#444">设备描述</div>
<div class="a" style="left:702.5px;top:277px;width:119.0px;height:10px;border:1px solid #e6e6e6;border-radius:1px"></div>
<div class="t" style="left:624px;top:338.5px;font-size:4px;color:#777">Copyright © 2024 安徽钧瑞 版权所有</div>
<div class="t" style="left:643px;top:356.55px;font-size:10.5px;color:#444">图&nbsp;&nbsp;<span style="font-family:'Liberation Serif',serif;font-weight:bold">1-2</span></div>
<div class="t" style="left:423.5px;top:412px;font-size:18px;font-weight:bold;color:#222;letter-spacing:0.5px">1.3 IPv4 地址</div>
<div class="a" style="left:423px;top:457px;width:161px;height:12px;background:#c8d6ee"></div>
<div class="t" style="left:423px;top:457.1px;font-size:11.8px;color:#333">1.点击&nbsp; 系统功能->IPv4 地址。</div>
<div class="t" style="left:423px;top:474.6px;font-size:11.8px;color:#333;letter-spacing:-0.2px">2.该页面用于配置交换机 IPv4 地址登录地址。</div>
<div class="a" style="left:423.6px;top:495.1px;width:471.4px;height:235.9px;border-style:solid;border-color:#555 #777 #9a9a9a #a8a8a8;border-width:1px 1.2px 1.6px 1.4px"></div>
<div class="a" style="left:424.9px;top:496px;width:467.9px;height:13.3px;background:#d0192b"></div>
<div class="a" style="left:428px;top:497px;width:10.5px;height:10.5px;border-radius:50%;background:#fff"></div>
<svg style="left:429.5px;top:498.5px" width="8" height="8" viewBox="0 0 8 8"><path d="M5.5 1.5H3a1.2 1.2 0 0 0 0 2.4h2a1.2 1.2 0 0 1 0 2.4H2" fill="none" stroke="#d0192b" stroke-width="1.2"/></svg>
<div class="t" style="left:441px;top:502.35px;font-size:4.1px;color:#f6c6cc;font-weight:bold">SKS3200-8E2X</div>
<div class="t" style="left:813px;top:499.95px;font-size:5.5px;color:#fbe0e3">admin</div>
<div class="t" style="left:832.7px;top:500.2px;font-size:5px;color:#fbe0e3">注销</div>
<div class="a" style="left:844.3px;top:498.9px;width:33.5px;height:7.4px;background:#fff;border-radius:1px"></div>
<div class="t" style="left:846px;top:500.8px;font-size:3.8px;color:#555">简体中文</div>
<div class="a" style="left:425px;top:512.8px;width:64.6px;height:204.1px;border-right:1px solid #dedede;border-bottom:1px solid #e8e8e8;border-top:1px solid #f0f0f0"></div>
<div class="a" style="left:498.5px;top:513px;width:385.8px;height:204.4px;border:1px solid #e6e6e6;border-radius:6px"></div>
<div class="a" style="left:498.5px;top:529px;width:385.5px;height:1px;background:#e8e8e8"></div>
<div class="a" style="left:503px;top:516.8px;width:49px;height:8.8px;border:0.8px solid #d86a76;border-radius:5px"></div>
<div class="a" style="left:554.3px;top:516.8px;width:49.2px;height:8.8px;border:0.8px solid #d86a76;border-radius:5px"></div>
<div class="t" style="left:521px;top:519.35px;font-size:3.7px;color:#d86a76"><span style="font-size:5px">↻</span>&nbsp;刷新</div>
<div class="t" style="left:571px;top:519.35px;font-size:3.7px;color:#d86a76"><span style="font-size:4.5px">✓</span>&nbsp;&nbsp;应用</div>
<div class="a" style="left:863.8px;top:517.2px;width:7.6px;height:7.6px;border-radius:50%;border:0.7px solid #555"></div>
<div class="t" style="left:866.1px;top:518.8px;font-size:5px;color:#555;font-weight:bold">?</div>
<div class="a" style="left:436px;top:520.5px;width:3px;height:3.0px;background:#888"></div>
<div class="t" style="left:448px;top:521.2px;font-size:3.6px;color:#333">系统功能</div>
<svg style="left:473.5px;top:520.5px" width="5" height="3" viewBox="0 0 5 3"><path d="M0.3 0.3l2.2 2.2 2.2-2.2" fill="none" stroke="#e07080" stroke-width="0.7"/></svg>
<div class="t" style="left:448px;top:532.7px;font-size:3.6px;color:#333">系统信息</div>
<div class="a" style="left:435.4px;top:539.6px;width:42.0px;height:9.8px;background:#d42a33;border-radius:5px"></div>
<div class="t" style="left:448px;top:543.2px;font-size:3.6px;color:#fff">IPv4地址</div>
<div class="a" style="left:471px;top:543.7px;width:1.8px;height:1.8px;background:#fff;border-radius:50%"></div>
<div class="t" style="left:448px;top:555.1px;font-size:3.6px;color:#333">IPv6地址</div>
<div class="t" style="left:448px;top:566.2px;font-size:3.6px;color:#333">用户</div>
<div class="t" style="left:448px;top:577.5px;font-size:3.6px;color:#333">系统时间</div>
<div class="t" style="left:448px;top:588.6px;font-size:3.6px;color:#333">SNTP</div>
<div class="t" style="left:448px;top:599.9px;font-size:3.6px;color:#333">环路保护</div>
<div class="t" style="left:448px;top:611.2px;font-size:3.6px;color:#333">STP配置</div>
<div class="t" style="left:448px;top:622.2px;font-size:3.6px;color:#333">重启与恢复</div>
<div class="t" style="left:448px;top:636.2px;font-size:3.6px;color:#333">网络设置</div>
<div class="a" style="left:435.5px;top:635.5px;width:3.0px;height:3.0px;background:#888;border-radius:1px"></div>
<svg style="left:473.5px;top:635.5px" width="5" height="3" viewBox="0 0 5 3"><path d="M0.3 0.3l2.2 2.2 2.2-2.2" fill="none" stroke="#e07080" stroke-width="0.7"/></svg>
<div class="t" style="left:448px;top:648.7px;font-size:3.6px;color:#333">状态信息</div>
<div class="a" style="left:435.5px;top:648.0px;width:3.0px;height:3.0px;background:#888;border-radius:1px"></div>
<svg style="left:473.5px;top:648.0px" width="5" height="3" viewBox="0 0 5 3"><path d="M0.3 0.3l2.2 2.2 2.2-2.2" fill="none" stroke="#e07080" stroke-width="0.7"/></svg>
<div class="t" style="left:448px;top:661.2px;font-size:3.6px;color:#333">系统工具</div>
<div class="a" style="left:435.5px;top:660.5px;width:3.0px;height:3.0px;background:#888;border-radius:1px"></div>
<svg style="left:473.5px;top:660.5px" width="5" height="3" viewBox="0 0 5 3"><path d="M0.3 0.3l2.2 2.2 2.2-2.2" fill="none" stroke="#e07080" stroke-width="0.7"/></svg>
<div class="a" style="left:533.5px;top:540.0px;width:122.5px;height:10.8px;background:#eeeeee;border-radius:1px"></div>
<div class="t" style="left:444.79999999999995px;top:543.6px;width:300px;text-align:center;font-size:3.6px;color:#444">DHCP 设置 (IPv4)</div>
<div class="a" style="left:694.3px;top:540.0px;width:122.4px;height:10.2px;border:0.7px solid #ededed;border-radius:1px"></div>
<div class="t" style="left:697px;top:543.2px;font-size:4px;color:#333">禁用</div>
<div class="a" style="left:533.5px;top:553.4px;width:122.5px;height:10.8px;background:#eeeeee;border-radius:1px"></div>
<div class="t" style="left:444.79999999999995px;top:557.0px;width:300px;text-align:center;font-size:3.6px;color:#444">IP 地址 (IPv4)</div>
<div class="a" style="left:694.3px;top:553.4px;width:122.4px;height:10.2px;border:0.7px solid #ededed;border-radius:1px"></div>
<div class="t" style="left:697px;top:556.6px;font-size:4px;color:#333">192.168.10.12</div>
<div class="a" style="left:533.5px;top:566.8px;width:122.5px;height:10.8px;background:#eeeeee;border-radius:1px"></div>
<div class="t" style="left:444.79999999999995px;top:570.4px;width:300px;text-align:center;font-size:3.6px;color:#444">子网掩码 (IPv4)</div>
<div class="a" style="left:694.3px;top:566.8px;width:122.4px;height:10.2px;border:0.7px solid #ededed;border-radius:1px"></div>
<div class="t" style="left:697px;top:570.0px;font-size:4px;color:#333">255.255.255.0</div>
<div class="a" style="left:533.5px;top:580.2px;width:122.5px;height:10.8px;background:#eeeeee;border-radius:1px"></div>
<div class="t" style="left:444.79999999999995px;top:583.8000000000001px;width:300px;text-align:center;font-size:3.6px;color:#444">默认网关(IPv4)</div>
<div class="a" style="left:694.3px;top:580.2px;width:122.4px;height:10.2px;border:0.7px solid #ededed;border-radius:1px"></div>
<div class="t" style="left:697px;top:583.4px;font-size:4px;color:#333">192.168.10.1</div>
<svg style="left:809px;top:544px" width="4" height="3" viewBox="0 0 4 3"><path d="M0.3 0.5l1.7 1.7 1.7-1.7" fill="none" stroke="#666" stroke-width="0.6"/></svg>
<div class="t" style="left:624px;top:720.7px;font-size:4px;color:#777">Copyright © 2024 安徽钧瑞 版权所有</div>
<div class="t" style="left:643px;top:740.05px;font-size:10.5px;color:#444">图&nbsp;&nbsp;<span style="font-family:'Liberation Serif',serif;font-weight:bold">1-3</span></div>
<div class="t" style="left:423px;top:756.75px;font-size:11.5px;color:#333">界面信息含义如下表所示。</div>
<div class="a" style="left:430.3px;top:772.2px;width:456.5px;height:57.8px;border:1.3px solid #333"></div>
<div class="a" style="left:430.3px;top:792.5px;width:456.5px;height:1.3px;background:#333"></div>
<div class="a" style="left:522.8px;top:772.2px;width:1.3px;height:57.8px;background:#333"></div>
<div class="t" style="left:436.5px;top:776.0px;font-size:12px;color:#222">配置项</div>
<div class="t" style="left:529px;top:776.0px;font-size:12px;color:#222">说明</div>
<div class="t" style="left:436.5px;top:796.8px;font-size:12px;color:#222">DHCP&nbsp; 设置</div>
<div class="t" style="left:529px;top:796.8px;font-size:12px;color:#222">禁用: 固定 IP 地址上网</div>

</div>
</div>
<div class="a" id="ftb" style="left:377px;top:420px;width:254px;height:28px;background:#fff;border-radius:5px;box-shadow:0 1px 4px rgba(0,0,0,0.18);z-index:20">
<svg style="left:9px;top:8px" width="13" height="13" viewBox="0 0 13 13"><path d="M4.5 8.5H2A1 1 0 0 1 1 7.5V2a1 1 0 0 1 1-1h5.5a1 1 0 0 1 1 1v2.5" fill="none" stroke="#444" stroke-width="1.1"/><rect x="4.5" y="4.5" width="7.5" height="7.5" rx="1.2" fill="none" stroke="#444" stroke-width="1.1"/></svg>
<div class="a" style="left:31px;top:4.5px;width:1px;height:19px;background:#e3e3e3"></div>
<svg style="left:39.5px;top:7.5px" width="16" height="14" viewBox="0 0 16 14"><path d="M8 9.5H5L2.5 12V9.5H1V1h12v4" fill="none" stroke="#444" stroke-width="1.1" stroke-linejoin="round"/><path d="M3.5 3.8h7M3.5 6.3h3.5" stroke="#444" stroke-width="1.1"/><circle cx="11.8" cy="9.8" r="3.6" fill="#3d73d8"/><path d="M11.8 7.9v3.8M9.9 9.8h3.8" stroke="#fff" stroke-width="1.1"/></svg>
<svg style="left:63px;top:7px" width="16" height="16" viewBox="0 0 16 16"><path d="M7.2 0.8L4 6.5 M4 6.5l5 2.6 M4 6.5L1.2 12.3h4.3l3.5-3.2 M9 9.1c1.5 1 3 1.2 5 0.3" fill="none" stroke="#444" stroke-width="1" stroke-linejoin="round" stroke-linecap="round"/><rect x="0" y="14" width="15" height="2" fill="#f2e52b"/></svg>
<svg style="left:85px;top:12px" width="5" height="4" viewBox="0 0 5 4"><path d="M0.5 0.8l2 2 2-2" fill="none" stroke="#555" stroke-width="0.9"/></svg>
<svg style="left:103px;top:7.5px" width="9" height="14" viewBox="0 0 9 14"><path d="M1.5 0.5v6a3 3 0 0 0 6 0v-6" fill="none" stroke="#444" stroke-width="1.1"/><path d="M0 12.5h9" stroke="#3d73d8" stroke-width="1.1"/></svg>
<svg style="left:122.5px;top:12px" width="5" height="4" viewBox="0 0 5 4"><path d="M0.5 0.8l2 2 2-2" fill="none" stroke="#555" stroke-width="0.9"/></svg>
<svg style="left:140.5px;top:8px" width="11" height="13" viewBox="0 0 11 13"><path d="M8.6 2.6C8 1.4 6.9 0.8 5.5 0.8 3.7 0.8 2.4 1.8 2.4 3.3c0 1.2.8 2 2.2 2.6 M6.6 7.4c1.4.6 2 1.3 2 2.4 0 1.5-1.3 2.5-3.1 2.5-1.6 0-2.8-.7-3.3-2" fill="none" stroke="#444" stroke-width="1.05"/><path d="M0 6.6h11" stroke="#3d73d8" stroke-width="1.1"/></svg>
<svg style="left:160px;top:12px" width="5" height="4" viewBox="0 0 5 4"><path d="M0.5 0.8l2 2 2-2" fill="none" stroke="#555" stroke-width="0.9"/></svg>
<div class="a" style="left:174.5px;top:4.5px;width:1px;height:19px;background:#e3e3e3"></div>
<svg style="left:183px;top:7.5px" width="14" height="14" viewBox="0 0 14 14"><rect x="0.6" y="0.6" width="12.8" height="12.8" fill="none" stroke="#444" stroke-width="1.1" stroke-dasharray="2 1.6"/><path d="M3.8 3.6h6.4M7 3.6v7" fill="none" stroke="#3d73d8" stroke-width="1.1"/></svg>
<div class="t" id="edtxt" style="left:204px;top:9px;font-size:10px;color:#444">编辑文本</div>
</div>


<!-- main scrollbar -->
<div class="a" style="left:1067px;top:162px;width:11px;height:11px;border:1px solid #d0d0d0;background:#f7f7f7"></div>
<svg style="left:1069px;top:165px" width="7" height="4" viewBox="0 0 7 4"><path d="M0 4L3.5 0 7 4z" fill="#a8a8a8"/></svg>
<div class="a" style="left:1067px;top:301px;width:11px;height:29px;border:1px solid #d0d0d0;border-radius:2px;background:#f7f7f7"></div>
<div class="a" style="left:1070px;top:311px;width:5px;height:9px;background:repeating-linear-gradient(#aaa 0 1px,transparent 1px 2px)"></div>
<div class="a" style="left:1067px;top:799px;width:11px;height:11px;border:1px solid #d0d0d0;background:#f7f7f7"></div>
<svg style="left:1069px;top:803px" width="7" height="4" viewBox="0 0 7 4"><path d="M0 0L3.5 4 7 0z" fill="#a8a8a8"/></svg>

<!-- ============ STATUS BAR ============ -->
<div class="a" id="sb" style="left:0;top:810px;width:1080px;height:20px;background:#fff;border-top:1px solid #dedede">
  <div class="t" id="pginfo" style="left:3px;top:8.5px;font-size:10px;color:#444">第5页共20页</div>
  <svg style="left:72px;top:8px" width="7" height="11" viewBox="0 0 7 11"><path d="M6 0.5L1 5.5l5 5" fill="none" stroke="#444" stroke-width="1.1"/></svg>
  <svg style="left:101px;top:8px" width="7" height="11" viewBox="0 0 7 11"><path d="M1 0.5l5 5-5 5" fill="none" stroke="#444" stroke-width="1.1"/></svg>
  <svg style="left:913px;top:7px" width="11" height="14" viewBox="0 0 11 14"><rect x="0.6" y="0.6" width="9.8" height="14" rx="1" fill="none" stroke="#555" stroke-width="1.1"/><path d="M2.5 3.5V2.3h1.5M7 2.3h1.5v1.2M8.5 10v1.2H7M4 11.2H2.5V10" fill="none" stroke="#4a7be0" stroke-width="1"/></svg>
  <svg style="left:939px;top:7px" width="12" height="14" viewBox="0 0 12 14"><path d="M0.6 10V1.6a1 1 0 0 1 1-1h8.8a1 1 0 0 1 1 1V10" fill="none" stroke="#555" stroke-width="1.1"/><path d="M0.5 12.5h11M2.3 11l-1.5 1.5 1.5 1.5M9.7 11l1.5 1.5-1.5 1.5" fill="none" stroke="#4a7be0" stroke-width="0.9"/></svg>
  <div class="a" style="left:966px;top:13px;width:11px;height:1px;background:#444"></div>
  <div class="t" id="zoomst" style="left:994px;top:8.5px;font-size:10px;color:#444">缩放100%</div>
  <div class="a" style="left:1054px;top:13px;width:12px;height:1.2px;background:#444"></div>
  <div class="a" style="left:1059.4px;top:8px;width:1.2px;height:11px;background:#444"></div>
</div>

<!-- watermark -->
<div class="a" style="left:951px;top:796.5px;width:23.5px;height:23px;border-radius:50%;border:1.3px solid rgba(255,255,255,0.9);box-shadow:0.6px 0.6px 0.8px rgba(0,0,0,0.28),inset 0.6px 0.6px 0.8px rgba(0,0,0,0.2);z-index:40"></div>
<div class="t" style="left:955.5px;top:799.5px;font-size:14.5px;font-weight:300;color:rgba(255,255,255,0.92);text-shadow:0.7px 0.7px 0.8px rgba(0,0,0,0.35);transform:skewX(-12deg);z-index:41">值</div>
<div class="t" style="left:982px;top:798.5px;font-size:17.5px;font-weight:300;color:rgba(255,255,255,0.92);text-shadow:0.7px 0.7px 0.8px rgba(0,0,0,0.35);z-index:41">什么值得买</div>
<!-- right window border -->
<div class="a" style="left:1079px;top:35px;width:1px;height:795px;background:#8a8a8a;z-index:50"></div>

</body></html>
